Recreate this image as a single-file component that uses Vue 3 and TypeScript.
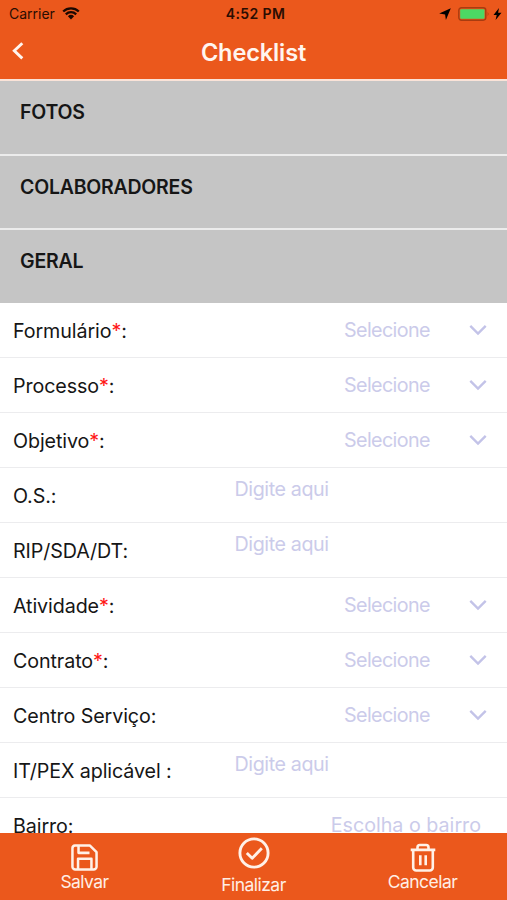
<script setup lang="ts">
type Kind = 'select' | 'text' | 'search'

interface Field {
  label: string
  required?: boolean
  tail: string
  kind: Kind
  placeholder: string
}

const sections: string[] = ['FOTOS', 'COLABORADORES', 'GERAL']

const fields: Field[] = [
  { label: 'Formulário', required: true, tail: ':', kind: 'select', placeholder: 'Selecione' },
  { label: 'Processo', required: true, tail: ':', kind: 'select', placeholder: 'Selecione' },
  { label: 'Objetivo', required: true, tail: ':', kind: 'select', placeholder: 'Selecione' },
  { label: 'O.S.', tail: ':', kind: 'text', placeholder: 'Digite aqui' },
  { label: 'RIP/SDA/DT', tail: ':', kind: 'text', placeholder: 'Digite aqui' },
  { label: 'Atividade', required: true, tail: ':', kind: 'select', placeholder: 'Selecione' },
  { label: 'Contrato', required: true, tail: ':', kind: 'select', placeholder: 'Selecione' },
  { label: 'Centro Serviço', tail: ':', kind: 'select', placeholder: 'Selecione' },
  { label: 'IT/PEX aplicável', tail: ' :', kind: 'text', placeholder: 'Digite aqui' },
  { label: 'Bairro', tail: ':', kind: 'search', placeholder: 'Escolha o bairro' },
]
</script>

<template>
  <div class="screen">
    <header class="header">
      <div class="status">
        <div class="carrier">
          <span>Carrier</span>
          <svg class="wifi" width="18" height="13" viewBox="0 0 18 13">
            <path d="M1.2 4.5a11.2 11.2 0 0 1 15.6 0" />
            <path d="M3.8 7.3a7.5 7.5 0 0 1 10.4 0" />
            <path class="solid" d="M5.9 9.3a4.5 4.5 0 0 1 6.2 0L9 12.4z" />
          </svg>
        </div>
        <span class="clock">4:52 PM</span>
        <div class="power">
          <svg width="12" height="12" viewBox="0 0 12 12"><path d="M11.8.2 6.9 12 6.1 6.4.2 5.5z" /></svg>
          <svg width="33" height="14" viewBox="0 0 33 14">
            <rect x=".8" y=".8" width="27" height="12.4" rx="2.6" fill="none" stroke="#a83c10" stroke-width="1.4" />
            <rect x="2.2" y="2.2" width="24.3" height="9.6" rx="1" fill="#4cd964" />
            <path d="M29.7 4.8q1.8 2.2 0 4.4z" fill="#a83c10" />
          </svg>
          <svg width="9" height="12" viewBox="0 0 9 12"><path d="M6 0 .5 7h3.2L2.6 12 8.5 4.7H5.1z" /></svg>
        </div>
      </div>
      <div class="nav">
        <svg class="back" width="14" height="20" viewBox="0 0 14 20"><path d="m11.3 2.2-8 7.6 8 7.6" /></svg>
        <h1>Checklist</h1>
      </div>
    </header>

    <main class="content">
      <section v-for="name in sections" :key="name" class="section">{{ name }}</section>
      <div v-for="field in fields" :key="field.label" class="row">
        <label class="label">{{ field.label }}<span v-if="field.required" class="star">*</span>{{ field.tail }}</label>
        <div class="value" :class="field.kind">
          <span>{{ field.placeholder }}</span>
          <svg v-if="field.kind === 'select'" width="18" height="12" viewBox="0 0 18 12"><path d="m1.3 1.8 7.7 7.7 7.7-7.7" /></svg>
        </div>
      </div>
    </main>

    <footer class="footer">
      <button class="action" type="button">
        <svg class="save" width="27" height="27" viewBox="0 0 28 28">
          <path d="M4.2 1.5h15.2l7.1 7v15a3 3 0 0 1-3 3H4.5a3 3 0 0 1-3-3V4.4a2.9 2.9 0 0 1 2.7-2.9z" />
          <path d="M7.8 2v7.2h11.4M7.3 26V15.2h13.9V26" />
        </svg>
        <span>Salvar</span>
      </button>
      <button class="action finish" type="button">
        <svg width="32" height="32" viewBox="0 0 32 32">
          <circle cx="16" cy="16" r="14.1" />
          <path d="m8.8 16 5.4 5.2 9.6-10" />
        </svg>
        <span>Finalizar</span>
      </button>
      <button class="action cancel" type="button">
        <svg width="26" height="29" viewBox="0 0 26 29">
          <path d="M.7 6.9h24.6M7.5 6.5V4.4a2.4 2.4 0 0 1 2.4-2.4h6.2a2.4 2.4 0 0 1 2.4 2.4v2.1M3.2 7v17.5a3 3 0 0 0 3 3h13.6a3 3 0 0 0 3-3V7M10.3 12.3v9.9M15.7 12.3v9.9" />
        </svg>
        <span>Cancelar</span>
      </button>
    </footer>
  </div>
</template>

<style>
body {
  margin: 0;
}
</style>

<style scoped>
.screen {
  display: flex;
  flex-direction: column;
  width: 507px;
  height: 900px;
  overflow: hidden;
  background: #fff;
  color: #161616;
  font-family: Inter, "Liberation Sans", sans-serif;
}
.header {
  flex: none;
  box-sizing: border-box;
  height: 81px;
  background: #eb581c;
  border-bottom: 2px solid #fae3d8;
}
.status {
  display: grid;
  grid-template-columns: 1fr auto 1fr;
  align-items: center;
  height: 27px;
  padding: 0 5px 0 9px;
  color: #2a0d02;
  font-size: 14px;
}
.carrier,
.power {
  display: flex;
  align-items: center;
}
.carrier {
  gap: 7px;
}
.wifi {
  margin-top: -1px;
}
.wifi path {
  fill: none;
  stroke: #1c0801;
  stroke-width: 2.3;
}
.wifi .solid {
  fill: #1c0801;
  stroke: none;
}
.clock {
  font-weight: 600;
  letter-spacing: 0.4px;
}
.power {
  justify-content: flex-end;
  gap: 7px;
}
.power svg:last-child {
  margin-left: -5px;
}
.nav {
  display: grid;
  grid-template-columns: 40px 1fr 40px;
  align-items: center;
  height: 50px;
}
.back {
  margin: -3px 0 0 11px;
  fill: none;
  stroke: #fff5ef;
  stroke-width: 2.9;
}
h1 {
  margin: 0;
  padding-top: 1px;
  text-align: center;
  color: #fff5ef;
  font-size: 23.6px;
  font-weight: 600;
  letter-spacing: -0.15px;
  line-height: 50px;
}
.content {
  flex: 1;
  min-height: 0;
  overflow: hidden;
}
.section {
  box-sizing: border-box;
  height: 74.5px;
  padding: 16px 20px 0;
  border-bottom: 2px solid #ececec;
  background: #c5c5c5;
  font-size: 19.5px;
  font-weight: 600;
  letter-spacing: -0.23px;
  line-height: 30px;
}
.section:nth-child(3) {
  height: 73px;
  border-bottom: 0;
}
.row {
  box-sizing: border-box;
  display: grid;
  grid-template-columns: 221px 1fr;
  height: 55px;
  padding-left: 13px;
  border-bottom: 1.5px solid #ececee;
}
.label {
  padding-top: 1px;
  font-size: 19.7px;
  letter-spacing: -0.1px;
  line-height: 54px;
  white-space: pre;
}
.star {
  color: #ff1717;
}
.value {
  display: flex;
  align-items: center;
  height: 54px;
  color: #cbcbea;
  font-size: 19.7px;
  white-space: nowrap;
}
.select {
  justify-content: space-between;
  padding: 0 20px 0 110px;
  letter-spacing: -0.6px;
}
.select path {
  fill: none;
  stroke: #c3c3e8;
  stroke-width: 2.4;
}
.text {
  height: 42px;
  padding-left: 0.5px;
  letter-spacing: -0.4px;
}
.search {
  justify-content: flex-end;
  padding-right: 26px;
}
.footer {
  flex: none;
  display: grid;
  grid-template-columns: repeat(3, 1fr);
  height: 67px;
  background: #eb581c;
}
.action {
  display: flex;
  flex-direction: column;
  align-items: center;
  padding: 11px 0 0;
  border: 0;
  background: none;
  color: #ffeee5;
  font: inherit;
  font-size: 17.5px;
  letter-spacing: -0.55px;
  line-height: 20px;
}
.action svg {
  flex: none;
  fill: none;
  stroke: #fff1e8;
  stroke-width: 2.6;
  stroke-linejoin: round;
}
.save {
  margin-bottom: 1px;
}
.finish {
  padding-top: 4px;
}
.finish svg {
  stroke-width: 2.9;
}
.finish span {
  margin-top: 6px;
}
.cancel {
  padding-top: 10px;
}
</style>
